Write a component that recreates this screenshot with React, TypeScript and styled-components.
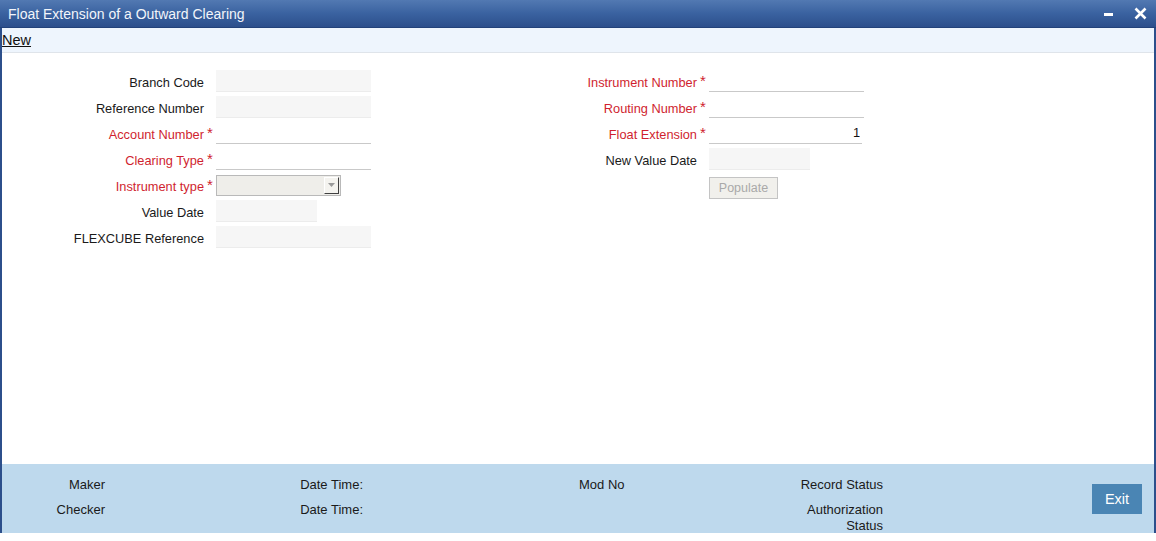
import styled, { createGlobalStyle } from "styled-components";

const GlobalStyle = createGlobalStyle`
  html, body {
    margin: 0;
    padding: 0;
    background: #fff;
    font-family: "Liberation Sans", Arial, sans-serif;
    font-size: 12px;
  }
`;

type Field = {
  label: string;
  required?: boolean;
  kind?: "readonly" | "edit" | "select";
  width?: number;
  value?: string;
};

const leftFields: Field[] = [
  { label: "Branch Code", kind: "readonly" },
  { label: "Reference Number", kind: "readonly" },
  { label: "Account Number", required: true, kind: "edit" },
  { label: "Clearing Type", required: true, kind: "edit" },
  { label: "Instrument type", required: true, kind: "select" },
  { label: "Value Date", kind: "readonly", width: 101 },
  { label: "FLEXCUBE Reference", kind: "readonly" },
];

const rightFields: Field[] = [
  { label: "Instrument Number", required: true, kind: "edit" },
  { label: "Routing Number", required: true, kind: "edit" },
  { label: "Float Extension", required: true, kind: "edit", width: 153, value: "1" },
  { label: "New Value Date", kind: "readonly", width: 101 },
];

const App = () => {
  return (
    <>
      <GlobalStyle />
      <Window>
        <TitleBar>
          <Title>Float Extension of a Outward Clearing</Title>
          <WinButtons>
            <svg width="10" height="10" viewBox="0 0 10 10">
              <rect x="0" y="4" width="9" height="3" fill="#fff" />
            </svg>
            <svg width="13" height="13" viewBox="0 0 13 13">
              <path d="M1.5 1.5 L11.5 11.5 M11.5 1.5 L1.5 11.5" stroke="#fff" strokeWidth="2.6" />
            </svg>
          </WinButtons>
        </TitleBar>
        <Toolbar>
          <ToolLink>New</ToolLink>
        </Toolbar>
        <Body>
          <Column>
            {leftFields.map((f) => (
              <FieldRow key={f.label} field={f} />
            ))}
          </Column>
          <Column>
            {rightFields.map((f) => (
              <FieldRow key={f.label} field={f} />
            ))}
            <Row>
              <Label />
              <Star />
              <PopulateButton disabled>Populate</PopulateButton>
            </Row>
          </Column>
        </Body>
        <Footer>
          <FootCell $w={103} $align="right">
            <FootText>Maker</FootText>
            <FootText>Checker</FootText>
          </FootCell>
          <FootCell $w={258} $align="right">
            <FootText>Date Time:</FootText>
            <FootText>Date Time:</FootText>
          </FootCell>
          <FootCell $w={216} $align="left" />
          <FootCell $w={121} $align="left">
            <FootText>Mod No</FootText>
          </FootCell>
          <FootCell $w={183} $align="right">
            <FootText>Record Status</FootText>
            <AuthText>Authorization Status</AuthText>
          </FootCell>
          <FootEnd>
            <ExitButton>Exit</ExitButton>
          </FootEnd>
        </Footer>
      </Window>
    </>
  );
};

const FieldRow = ({ field }: { field: Field }) => (
  <Row>
    <Label $required={field.required}>{field.label}</Label>
    <Star>{field.required ? "*" : ""}</Star>
    {field.kind === "select" ? (
      <SelectBox>
        <SelectArrow>
          <svg width="7" height="4" viewBox="0 0 7 4">
            <path d="M0 0 H7 L3.5 4 Z" fill="#9a9a9a" />
          </svg>
        </SelectArrow>
      </SelectBox>
    ) : (
      <Input
        readOnly
        $kind={field.kind || "edit"}
        style={{ width: field.width || 155 }}
        defaultValue={field.value || ""}
      />
    )}
  </Row>
);

export default App;

const Window = styled.div`
  height: 533px;
  border-left: 2px solid #2c4f8b;
  border-right: 2px solid #2c4f8b;
  display: flex;
  flex-direction: column;
  box-sizing: border-box;
`;

const TitleBar = styled.div`
  height: 28px;
  margin: 0 -2px;
  padding: 0 9px 0 8px;
  background: linear-gradient(#5279b2, #3a62a0 50%, #2c4f8c);
  border-bottom: 1px solid #22427a;
  display: flex;
  align-items: center;
  justify-content: space-between;
  box-sizing: border-box;
`;

const Title = styled.div`
  color: #f2f5fa;
  font-size: 14px;
`;

const WinButtons = styled.div`
  display: flex;
  align-items: center;
  gap: 20px;
`;

const Toolbar = styled.div`
  height: 25px;
  background: #eef5fd;
  border-bottom: 1px solid #dfe4ea;
  display: flex;
  align-items: center;
  box-sizing: border-box;
`;

const ToolLink = styled.span`
  font-size: 14.5px;
  color: #111;
  text-decoration: underline;
  margin-left: 0;
`;

const Body = styled.div`
  flex: 1;
  display: flex;
  gap: 136px;
  padding: 17px 0 0 12px;
`;

const Column = styled.div`
  display: flex;
  flex-direction: column;
  gap: 4px;
`;

const Row = styled.div`
  display: flex;
  align-items: center;
  height: 22px;
`;

const Label = styled.div<{ $required?: boolean }>`
  width: 190px;
  text-align: right;
  color: ${(p) => (p.$required ? "#d01f2f" : "#1a1a1a")};
  font-size: 12.8px;
  position: relative;
  top: 1px;
`;

const Star = styled.div`
  width: 12px;
  color: #d01f2f;
  font-size: 15px;
  text-align: center;
  align-self: flex-start;
  line-height: 22px;
`;

const Input = styled.input<{ $kind: string }>`
  height: 22px;
  box-sizing: border-box;
  border: none;
  border-bottom: 1px solid ${(p) => (p.$kind === "readonly" ? "#ececec" : "#c9c9c9")};
  background: ${(p) => (p.$kind === "readonly" ? "#f6f6f6" : "#fff")};
  font-family: "Liberation Sans", Arial, sans-serif;
  font-size: 12.8px;
  text-align: right;
  padding: 0 2px;
  color: #111;
  outline: none;
`;

const SelectBox = styled.div`
  width: 125px;
  height: 21px;
  box-sizing: border-box;
  border: 1px solid #b9b9b9;
  background: #efeeea;
  display: flex;
  justify-content: flex-end;
  align-items: center;
  padding-right: 1px;
`;

const SelectArrow = styled.div`
  width: 15px;
  height: 17px;
  box-sizing: border-box;
  background: #f4f3ef;
  border-top: 1px solid #fff;
  border-left: 1px solid #fff;
  border-right: 1px solid #404040;
  border-bottom: 1px solid #404040;
  display: flex;
  align-items: center;
  justify-content: center;
`;

const PopulateButton = styled.button`
  width: 69px;
  height: 22px;
  margin-top: 6px;
  background: #f1f0ec;
  border: 1px solid #c4c4c4;
  color: #a9a9a9;
  font-family: "Liberation Sans", Arial, sans-serif;
  font-size: 12.5px;
  padding: 0;
`;

const Footer = styled.div`
  height: 69px;
  background: #bed9ed;
  display: flex;
  align-items: flex-start;
  box-sizing: border-box;
  padding-top: 13px;
`;

const FootCell = styled.div<{ $w: number; $align: "left" | "right" }>`
  width: ${(p) => p.$w}px;
  flex-shrink: 0;
  display: flex;
  flex-direction: column;
  align-items: ${(p) => (p.$align === "right" ? "flex-end" : "flex-start")};
  text-align: ${(p) => p.$align};
  gap: 9px;
`;

const FootText = styled.div`
  font-size: 13px;
  line-height: 16px;
  color: #1a1a1a;
`;

const AuthText = styled(FootText)`
  width: 82px;
`;

const FootEnd = styled.div`
  flex: 1;
  align-self: stretch;
  display: flex;
  justify-content: flex-end;
  align-items: center;
  padding-right: 12px;
  margin-top: -13px;
`;

const ExitButton = styled.button`
  width: 50px;
  height: 30px;
  border: none;
  background: #4a85b4;
  color: #fff;
  font-family: "Liberation Sans", Arial, sans-serif;
  font-size: 14.5px;
  padding: 0;
  margin-top: 1px;
`;
